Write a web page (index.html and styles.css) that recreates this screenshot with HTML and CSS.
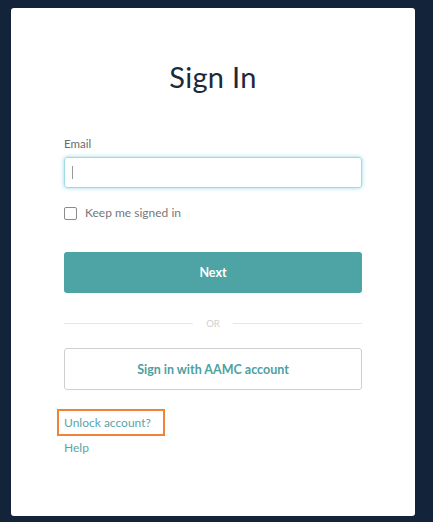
FILE: index.html
```html
<!DOCTYPE html>
<html lang="en">
<head>
  <meta charset="UTF-8">
  <title>Sign In</title>
  <link rel="stylesheet" href="styles.css">
</head>
<body>

  <div class="card">
    <h1 class="title">Sign In</h1>

    <form class="signin-form" onsubmit="return false;">
      <label class="field-label" for="email">Email</label>
      <div class="email-box">
        <span class="caret"></span>
        <input type="text" id="email" class="email-input">
      </div>

      <label class="remember">
        <span class="check"></span>
        Keep me signed in
      </label>

      <button class="btn-next" type="submit">Next</button>

      <div class="divider">
        <span class="line"></span>
        <span class="or">OR</span>
        <span class="line"></span>
      </div>

      <button class="btn-aamc" type="button">Sign in with AAMC account</button>
    </form>

    <div class="links">
      <a href="#" class="link unlock">Unlock account?</a>
      <a href="#" class="link">Help</a>
    </div>
  </div>

</body>
</html>
```

FILE: styles.css
```css
html, body {
  height: 100%;
}
body {
  margin: 0;
  background-color: #12233a;
  font-family: Lato, "Open Sans", Arial, sans-serif;
  padding: 8px 18px 6px 11px;
  box-sizing: border-box;
}
.card {
  background-color: #fff;
  width: 404px;
  height: 508px;
  border-radius: 3px;
  box-sizing: border-box;
  padding: 51px 53px 0 53px;
}
.title {
  margin: 0;
  text-align: center;
  font-weight: 400;
  font-size: 29px;
  line-height: 36px;
  color: #1d2a3a;
  letter-spacing: 0.3px;
}
.signin-form {
  margin-top: 42px;
  display: flex;
  flex-direction: column;
}
.field-label {
  font-size: 11.5px;
  color: #6b6b6b;
  line-height: 14px;
}
.email-box {
  position: relative;
  margin-top: 6px;
  height: 31px;
  border: 1px solid #9fdbe6;
  border-radius: 3px;
  box-shadow: 0 0 4px rgba(110, 200, 225, 0.7);
  box-sizing: border-box;
}
.email-input {
  width: 100%;
  height: 100%;
  border: none;
  outline: none;
  background: transparent;
  padding: 0 8px;
  box-sizing: border-box;
  font-size: 13px;
  caret-color: transparent;
}
.caret {
  position: absolute;
  left: 7px;
  top: 8px;
  width: 1px;
  height: 13px;
  background-color: #999;
}
.remember {
  display: flex;
  align-items: center;
  margin-top: 18px;
  font-size: 12px;
  color: #777;
  line-height: 14px;
}
.check {
  width: 11px;
  height: 11px;
  border: 1px solid #8a8a8a;
  border-radius: 2px;
  margin-right: 8px;
}
.btn-next {
  margin-top: 32px;
  height: 41px;
  border: none;
  border-radius: 3px;
  background-color: #4ea4a5;
  color: #fff;
  font-family: inherit;
  font-size: 12.5px;
  font-weight: 700;
  cursor: pointer;
}
.divider {
  display: flex;
  align-items: center;
  margin-top: 23px;
  height: 14px;
}
.line {
  flex: 1;
  height: 1px;
  background-color: #e6e6e6;
}
.or {
  font-size: 9.5px;
  color: #d0d0d0;
  padding: 0 13px;
}
.btn-aamc {
  margin-top: 18px;
  height: 42px;
  border: 1px solid #cfcfcf;
  border-radius: 3px;
  background-color: #fff;
  color: #4e9fa0;
  font-family: inherit;
  font-size: 12.5px;
  font-weight: 700;
  cursor: pointer;
}
.links {
  margin-top: 19px;
  display: flex;
  flex-direction: column;
  align-items: flex-start;
}
.link {
  font-size: 12px;
  color: #5aa5a8;
  text-decoration: none;
  line-height: 15px;
}
.unlock {
  margin-left: -7px;
  padding: 4px 12px 4px 5px;
  border: 2px solid #f0823a;
  margin-bottom: 4px;
}
```
